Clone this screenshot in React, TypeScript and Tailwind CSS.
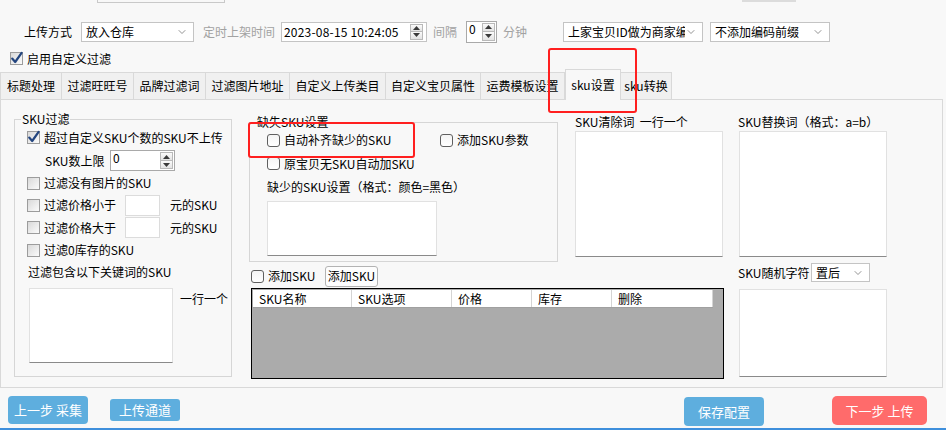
import { ChevronDown } from 'lucide-react'

function Box({ checked, round }: { checked?: boolean; round?: boolean }) {
  return (
    <span
      className={`flex shrink-0 items-center justify-center w-[13px] h-[13px] border ${
        round
          ? 'rounded-[3px] border-[#5f5f5f] bg-linear-to-b from-[#f4f4f4] to-[#ffffff]'
          : 'border-[#9c9c9c] bg-linear-to-br from-[#d9d9d9] to-[#fbfbfb]'
      }`}
    >
      {checked && (
        <svg width="13" height="13" viewBox="0 0 13 13" className="overflow-visible">
          <path d="M2.2 6.6 L5.2 10 L11.6 0.8" fill="none" stroke="#23457f" strokeWidth="2.2" strokeLinecap="round" strokeLinejoin="round" />
        </svg>
      )}
    </span>
  )
}

function Check({ label, checked, round, className = '' }: { label: string; checked?: boolean; round?: boolean; className?: string }) {
  return (
    <div className={`flex items-center gap-[4px] whitespace-nowrap ${className}`}>
      <Box checked={checked} round={round} />
      <span>{label}</span>
    </div>
  )
}

function Combo({ text, className = '' }: { text: string; className?: string }) {
  return (
    <div className={`flex shrink-0 items-center overflow-hidden border border-[#c4c4c4] bg-white pl-[4px] pr-[5px] ${className}`}>
      <span className="flex-1 min-w-0 whitespace-nowrap leading-[18px] [clip-path:inset(-4px_0_-4px_0)]">{text}</span>
      <ChevronDown className="w-[12px] h-[12px] shrink-0 text-[#6f6f6f]" strokeWidth={1.5} />
    </div>
  )
}

function Spinner() {
  return (
    <div className="flex flex-col w-[14px] h-full py-px pr-px">
      <div className="flex flex-1 items-center justify-center border border-[#b9b9b9] bg-linear-to-b from-[#fbfbfb] to-[#e3e3e3]">
        <svg width="7" height="4" viewBox="0 0 7 4">
          <path d="M0 4 L3.5 0 L7 4Z" fill="#3a3a3a" />
        </svg>
      </div>
      <div className="flex flex-1 items-center justify-center border border-t-0 border-[#b9b9b9] bg-linear-to-b from-[#fbfbfb] to-[#e3e3e3]">
        <svg width="7" height="4" viewBox="0 0 7 4">
          <path d="M0 0 L7 0 L3.5 4Z" fill="#3a3a3a" />
        </svg>
      </div>
    </div>
  )
}

function Spin({ value, className = '' }: { value: string; className?: string }) {
  return (
    <div className={`flex shrink-0 border border-[#a9a9a9] bg-white ${className}`}>
      <span className="flex-1 pl-[2px] pt-px leading-[12px]">{value}</span>
      <Spinner />
    </div>
  )
}

function TextBox({ className = '' }: { className?: string }) {
  return <div className={`shrink-0 bg-white border border-[#e1e1e1] border-b-[#8a8a8a] ${className}`} />
}

const tabs = [
  { t: '标题处理', w: 'w-[62px]' },
  { t: '过滤旺旺号', w: 'w-[72px]' },
  { t: '品牌过滤词', w: 'w-[72px]' },
  { t: '过滤图片地址', w: 'w-[84px]' },
  { t: '自定义上传类目', w: 'w-[96px]' },
  { t: '自定义宝贝属性', w: 'w-[95px]' },
  { t: '运费模板设置', w: 'w-[84px]' },
  { t: 'sku设置', w: 'w-[56px]', active: true },
  { t: 'sku转换', w: 'w-[51px]' },
]

const cols = [
  { t: 'SKU名称', w: 'w-[99px]' },
  { t: 'SKU选项', w: 'w-[100px]' },
  { t: '价格', w: 'w-[80px]' },
  { t: '库存', w: 'w-[80px]' },
  { t: '删除', w: 'w-[101px]' },
]

export default function App() {
  return (
    <div className="relative flex flex-col w-[946px] h-[430px] overflow-hidden bg-[#f8f8f8] text-[12px] leading-[14px] text-black font-['Noto_Sans_CJK_SC',sans-serif]">
      {/* bottoms of controls scrolled off the top */}
      <div className="flex h-[3px] shrink-0">
        <div className="ml-[97px] w-[128px] border-x border-b border-[#c9c9c9]" />
        <div className="ml-[517px] w-[54px] h-[2px] bg-[#dcdcdc]" />
      </div>

      {/* upload options */}
      <div className="mt-[17px] flex h-[23px] shrink-0 items-center">
        <span className="ml-[24px] w-[57px] shrink-0">上传方式</span>
        <Combo text="放入仓库" className="w-[113px] h-[20px]" />
        <span className="ml-[9px] w-[78px] shrink-0 text-[#a2a2a2]">定时上架时间</span>
        <div className="flex w-[146px] h-[20px] shrink-0 items-center border border-[#c4c4c4] bg-white">
          <span className="flex-1 pl-[2px] tracking-[0.2px]">2023-08-15 10:24:05</span>
          <div className="h-full pr-[2px]">
            <Spinner />
          </div>
        </div>
        <span className="ml-[6px] w-[33px] shrink-0 text-[#a2a2a2]">间隔</span>
        <Spin value="0" className="w-[31px] h-[22px]" />
        <span className="ml-[6px] w-[60px] shrink-0 text-[#a2a2a2]">分钟</span>
        <Combo text="上家宝贝ID做为商家编" className="w-[140px] h-[20px]" />
        <Combo text="不添加编码前缀" className="ml-[7px] w-[120px] h-[20px]" />
      </div>

      <div className="mt-[7px] flex h-[17px] shrink-0 items-center">
        <Check label="启用自定义过滤" checked className="ml-[10px]" />
      </div>

      {/* tabs */}
      <div className="mt-[2px] flex h-[30px] shrink-0 items-end">
        {tabs.map((tab, i) =>
          tab.active ? (
            <div
              key={tab.t}
              className={`relative z-10 -mb-px flex h-[31px] shrink-0 items-center justify-center border-x border-t border-[#d9d9d9] bg-[#f8f8f8] ${tab.w}`}
            >
              {tab.t}
            </div>
          ) : (
            <div
              key={tab.t}
              className={`flex h-[27px] shrink-0 items-center justify-center border-t border-r border-[#d9d9d9] bg-[#f0f0f0] ${i === 0 ? 'border-l' : ''} ${tab.w}`}
            >
              {tab.t}
            </div>
          )
        )}
      </div>

      {/* tab page */}
      <div className="flex w-[943px] h-[289px] shrink-0 items-start border border-[#d9d9d9] pl-[13px]">
        {/* SKU filter group */}
        <fieldset className="mt-[12px] w-[218px] h-[265px] shrink-0 border border-[#d6d6d6] pl-[12px]">
          <legend className="ml-[-6px] px-px leading-[14px]">SKU过滤</legend>
          <div className="flex h-[23px] items-center">
            <Check label="超过自定义SKU个数的SKU不上传" checked />
          </div>
          <div className="flex h-[23px] items-center">
            <span className="ml-[18px] w-[65px] shrink-0">SKU数上限</span>
            <Spin value="0" className="w-[65px] h-[21px]" />
          </div>
          <div className="flex h-[22px] items-center">
            <Check label="过滤没有图片的SKU" />
          </div>
          <div className="flex h-[22px] items-center">
            <Box />
            <span className="ml-[4px] w-[81px] shrink-0">过滤价格小于</span>
            <div className="w-[35px] h-[21px] shrink-0 border border-[#dcdcdc] bg-white" />
            <span className="ml-[10px] whitespace-nowrap">元的SKU</span>
          </div>
          <div className="flex h-[23px] items-center">
            <Box />
            <span className="ml-[4px] w-[81px] shrink-0">过滤价格大于</span>
            <div className="w-[35px] h-[21px] shrink-0 border border-[#dcdcdc] bg-white" />
            <span className="ml-[10px] whitespace-nowrap">元的SKU</span>
          </div>
          <div className="flex h-[22px] items-center">
            <Check label="过滤0库存的SKU" />
          </div>
          <div className="flex h-[22px] items-center">
            <span className="ml-px whitespace-nowrap">过滤包含以下关键词的SKU</span>
          </div>
          <div className="mt-[5px] flex items-start">
            <TextBox className="ml-[2px] w-[144px] h-[75px]" />
            <span className="ml-[7px] mt-[4px] whitespace-nowrap">一行一个</span>
          </div>
        </fieldset>

        {/* middle column */}
        <div className="ml-[17px] mt-[15px] w-[475px] shrink-0">
          <div className="flex items-start">
            <fieldset className="w-[309px] h-[147px] shrink-0 border border-[#d6d6d6] pl-[17px]">
              <legend className="ml-[-11px] px-px leading-[14px]">缺失SKU设置</legend>
              <div className="flex h-[22px] items-center">
                <div className="w-[173px] shrink-0">
                  <Check label="自动补齐缺少的SKU" round />
                </div>
                <Check label="添加SKU参数" round />
              </div>
              <div className="flex h-[25px] items-center">
                <Check label="原宝贝无SKU自动加SKU" round />
              </div>
              <div className="flex h-[21px] items-center whitespace-nowrap">缺少的SKU设置（格式：颜色=黑色）</div>
              <TextBox className="mt-[4px] w-[170px] h-[55px]" />
            </fieldset>
            <div className="ml-[17px] w-[148px] shrink-0">
              <div className="h-[14px] whitespace-pre">SKU清除词  一行一个</div>
              <TextBox className="mt-[2px] w-[148px] h-[126px]" />
            </div>
          </div>

          <div className="ml-[2px] mt-[3px] flex h-[22px] items-center">
            <Box round />
            <span className="ml-[4px] w-[57px] shrink-0 whitespace-nowrap">添加SKU</span>
            <button className="flex w-[53px] h-[21px] items-center justify-center rounded-[3px] border border-[#b3b3b3] bg-[#fdfdfd]">
              添加SKU
            </button>
          </div>

          <div className="ml-[2px] mt-px w-[473px] h-[91px] border border-black bg-[#ababab] p-px">
            <div className="flex h-[18px] w-[460px] border-b border-[#a0a0a0] bg-white">
              {cols.map(c => (
                <div key={c.t} className={`flex shrink-0 items-center border-r border-[#d4d4d4] pl-[6px] ${c.w}`}>
                  {c.t}
                </div>
              ))}
            </div>
          </div>
        </div>

        {/* right column */}
        <div className="ml-[14px] mt-[15px] w-[150px] shrink-0">
          <div className="h-[14px] whitespace-nowrap">SKU替换词（格式：a=b）</div>
          <TextBox className="ml-px mt-[2px] w-[148px] h-[126px]" />
          <div className="mt-[5px] flex h-[21px] items-center">
            <span className="w-[73px] shrink-0 whitespace-nowrap">SKU随机字符</span>
            <Combo text="置后" className="w-[59px] h-[19px]" />
          </div>
          <TextBox className="ml-px mt-[6px] w-[148px] h-[88px]" />
        </div>
      </div>

      {/* bottom buttons */}
      <div className="mt-[8px] flex h-[30px] shrink-0 items-start text-[13px] text-white">
        <button className="ml-[8px] flex w-[80px] h-[28px] items-center justify-center rounded-[4px] bg-[#5eaede]">上一步 采集</button>
        <button className="ml-[22px] mt-[3px] flex w-[70px] h-[22px] items-center justify-center rounded-[3px] bg-[#5eaede]">上传通道</button>
        <button className="ml-[504px] mt-px flex w-[80px] h-[29px] items-center justify-center rounded-[4px] bg-[#5eaede]">保存配置</button>
        <button className="ml-[68px] flex w-[95px] h-[29px] items-center justify-center rounded-[5px] bg-[#ff6b6b]">下一步 上传</button>
      </div>
      <div className="mt-auto h-[2px] shrink-0 bg-[#3f8fdc]" />

      {/* red annotation boxes */}
      <div className="pointer-events-none absolute left-[548px] top-[48px] w-[89px] h-[65px] rounded-[3px] border-2 border-[#ff1f1f]" />
      <div className="pointer-events-none absolute left-[248px] top-[122px] w-[167px] h-[36px] rounded-[3px] border-2 border-[#ff1f1f]" />
    </div>
  )
}
